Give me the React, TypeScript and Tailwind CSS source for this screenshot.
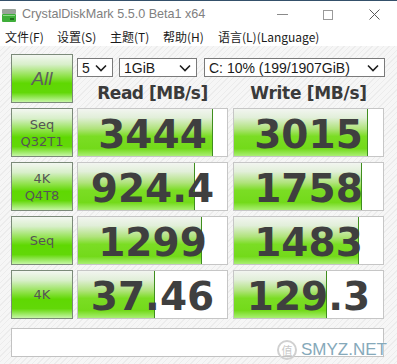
import React from "react";

const sans = "font-['Liberation_Sans','Noto_Sans_CJK_SC',sans-serif]";
const cjk = "font-['Noto_Sans_CJK_SC','Noto_Sans',sans-serif]";

function Chevron() {
  return (
    <svg width="12" height="8" viewBox="0 0 12 8" className="shrink-0">
      <polyline points="1,1.5 6,6.5 11,1.5" fill="none" stroke="#1e1e1e" strokeWidth="1.6" />
    </svg>
  );
}

function Select({ w, label }: { w: string; label: string }) {
  return (
    <div
      className={`${w} h-[19px] border border-[#7a7a7a] bg-white flex items-center justify-between pl-[4px] pr-[5px] text-[14px] text-[#1a1a1a] ${sans} leading-none`}
    >
      <span>{label}</span>
      <Chevron />
    </div>
  );
}

function Label({ lines, big }: { lines: string[]; big?: boolean }) {
  return (
    <div className="w-[62px] h-[49px] border border-[#7b8a79] bg-[linear-gradient(to_bottom,#f3f7f1_0%,#d8efca_20%,#8fe24a_45%,#5fd802_60%,#62d808_80%,#c6f6a6_100%)] flex flex-col items-center justify-center">
      {big ? (
        <span className={`text-[19px] italic text-[#5e5e5e] ${sans} leading-none`}>{lines[0]}</span>
      ) : (
        lines.map((l) => (
          <span key={l} className={`text-[13px] leading-[17px] text-[#555] font-['DejaVu_Sans',sans-serif]`}>
            {l}
          </span>
        ))
      )}
    </div>
  );
}

function Value({ value, fill }: { value: string; fill: number }) {
  return (
    <div className="relative w-[151px] h-[49px] border border-[#c6c6c6] bg-white flex">
      <div
        className="h-full border-r border-[#3f8e1e] bg-[linear-gradient(to_bottom,#f2f5f0_0%,#e2efda_18%,#b0e37c_42%,#7bdd24_58%,#73da1a_84%,#aaef74_100%)]"
        style={{ width: fill }}
      />
      <div className="absolute inset-0 flex items-center justify-center">
        <span className="text-[39px] font-bold leading-none text-[#3f3f3f] font-['DejaVu_Sans',sans-serif] pt-[4px]">
          {value}
        </span>
      </div>
    </div>
  );
}

const rows = [
  { label: ["Seq", "Q32T1"], read: "3444", rf: 135, write: "3015", wf: 134 },
  { label: ["4K", "Q4T8"], read: "924.4", rf: 117, write: "1758", wf: 128 },
  { label: ["Seq"], read: "1299", rf: 124, write: "1483", wf: 125 },
  { label: ["4K"], read: "37.46", rf: 77, write: "129.3", wf: 93 },
];

export default function App() {
  return (
    <div className="relative w-[397px] h-[364px] overflow-hidden bg-white">
      {/* title bar */}
      <div className="h-[28px] border-t border-[#34506a] flex items-center">
        <svg width="16" height="16" viewBox="0 0 16 16" className="ml-[1px] mr-[5px]">
          <rect x="1" y="2" width="14" height="5" rx="1" fill="#9aa29a" />
          <rect x="1" y="7" width="14" height="8" rx="1" fill="#3fae3a" />
          <rect x="2" y="8" width="12" height="1" fill="#8ed88a" />
          <rect x="9" y="11" width="4" height="2" fill="#1d6e1a" />
        </svg>
        <span className={`text-[12.6px] text-[#808080] ${sans}`}>CrystalDiskMark 5.5.0 Beta1 x64</span>
        <div className="ml-auto flex items-center">
          <div className="w-[46px] h-[28px] flex items-center justify-center">
            <div className="w-[11px] h-[1px] bg-[#8a8a8a]" />
          </div>
          <div className="w-[46px] h-[28px] flex items-center justify-center">
            <div className="w-[10px] h-[10px] border border-[#9a9a9a]" />
          </div>
          <div className="w-[46px] h-[28px] flex items-center justify-center">
            <svg width="11" height="11" viewBox="0 0 11 11">
              <path d="M0.5 0.5 L10.5 10.5 M10.5 0.5 L0.5 10.5" stroke="#5a5a5a" strokeWidth="1" />
            </svg>
          </div>
        </div>
      </div>
      {/* menu */}
      <div className={`h-[18px] flex items-center text-[12px] text-[#1a1a1a] ${cjk} leading-none`}>
        <span className="ml-[5px] w-[52px]">文件(F)</span>
        <span className="w-[53px]">设置(S)</span>
        <span className="w-[53px]">主题(T)</span>
        <span className="w-[55px]">帮助(H)</span>
        <span>语言(L)(Language)</span>
      </div>
      {/* main */}
      <div className="h-[318px] bg-[repeating-linear-gradient(135deg,#f6f6f6_0px,#f6f6f6_3px,#ececec_3px,#ececec_4px)] pt-[8px] pl-[11px] flex flex-col gap-[5px]">
        <div className="flex gap-[4px] h-[49px]">
          <Label lines={["All"]} big />
          <div className="flex flex-col">
            <div className="flex mt-[4px]">
              <Select w="w-[36px]" label="5" />
              <div className="ml-[6px]">
                <Select w="w-[78px]" label="1GiB" />
              </div>
              <div className="ml-[7px]">
                <Select w="w-[181px]" label="C: 10% (199/1907GiB)" />
              </div>
            </div>
            <div className="flex gap-[5px] mt-[7px]">
              <div className="w-[151px] text-center text-[17px] tracking-[-0.5px] font-bold text-[#3a3a3a] font-['DejaVu_Sans',sans-serif] leading-[18px]">
                Read [MB/s]
              </div>
              <div className="w-[151px] text-center text-[17px] tracking-[-0.3px] font-bold text-[#3a3a3a] font-['DejaVu_Sans',sans-serif] leading-[18px]">
                Write [MB/s]
              </div>
            </div>
          </div>
        </div>
        {rows.map((r, i) => (
          <div key={i} className="flex">
            <Label lines={r.label} />
            <div className="ml-[4px]">
              <Value value={r.read} fill={r.rf} />
            </div>
            <div className="ml-[5px]">
              <Value value={r.write} fill={r.wf} />
            </div>
          </div>
        ))}
        <div className="mt-[4px] w-[373px] h-[29px] border border-[#c2c2c2] bg-white" />
      </div>
      {/* watermark */}
      <div className="absolute left-[277px] top-[337px] flex items-center gap-[4px] pointer-events-none">
        <div className={`w-[20px] h-[20px] rounded-full border-2 border-[#d0d0d0] flex items-center justify-center text-[11px] text-[#c8c8c8] ${cjk}`}>
          值
        </div>
        <span className={`text-[17px] text-[#86a9ba] ${sans} [text-shadow:0_0_2px_#fff]`}>SMYZ.NET</span>
      </div>
    </div>
  );
}
